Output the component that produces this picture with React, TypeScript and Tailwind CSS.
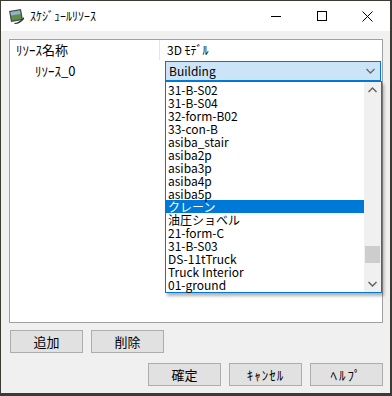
import React from "react";

const items = [
  "31-B-S02",
  "31-B-S04",
  "32-form-B02",
  "33-con-B",
  "asiba_stair",
  "asiba2p",
  "asiba3p",
  "asiba4p",
  "asiba5p",
  "クレーン",
  "油圧ショベル",
  "21-form-C",
  "31-B-S03",
  "DS-11tTruck",
  "Truck Interior",
  "01-ground",
];

function Chevron({ up = false, color = "#606060" }: { up?: boolean; color?: string }) {
  return (
    <svg width="9" height="6" viewBox="0 0 9 6">
      <path
        d={up ? "M0.5 5 L4.5 1 L8.5 5" : "M0.5 1 L4.5 5 L8.5 1"}
        fill="none"
        stroke={color}
        strokeWidth="1.4"
      />
    </svg>
  );
}

function Btn({ label, track = "" }: { label: string; track?: string }) {
  return (
    <div
      className={
        "w-[73px] h-[23px] bg-[#e1e1e1] border border-[#adadad] flex items-center justify-center text-[13px] text-black " +
        track
      }
    >
      {label}
    </div>
  );
}

export default function App() {
  return (
    <div
      className="w-[392px] h-[396px] bg-[#3c3a34] pt-px pl-px pr-[2px] pb-[3px]"
      style={{ fontFamily: "'Noto Sans CJK JP', 'Noto Sans', sans-serif" }}
    >
      <div className="w-full h-full flex flex-col bg-[#f0f0f0]">
        {/* Title bar */}
        <div className="h-[30px] bg-white flex items-center shrink-0">
          <div className="ml-[7px] w-[16px] h-[16px]">
            <svg width="17" height="17" viewBox="0 0 17 17">
              <path d="M1 3 L13 1 L15 12 L3 14 Z" fill="#4a4a4a" />
              <path d="M2.5 4 L12 2.5 L13.5 11 L4 12.5 Z" fill="#5e8f4a" />
              <path d="M2.5 4 L12 2.5 L12.5 6 L3 7.5 Z" fill="#8fb3c9" />
              <path d="M6 15 Q11 15 16 9 L16 11 Q12 16 7 16 Z" fill="#2e2e2e" />
            </svg>
          </div>
          <div className="ml-[6px] text-[12px] text-black leading-none">ｽｹｼﾞｭｰﾙﾘｿｰｽ</div>
          <div className="ml-auto flex h-full">
            <div className="w-[46px] h-full flex items-center justify-center">
              <div className="w-[10px] h-px bg-black" />
            </div>
            <div className="w-[46px] h-full flex items-center justify-center">
              <div className="w-[10px] h-[10px] border border-black" />
            </div>
            <div className="w-[45px] h-full flex items-center justify-center">
              <svg width="11" height="11" viewBox="0 0 11 11">
                <path d="M0.5 0.5 L10.5 10.5 M10.5 0.5 L0.5 10.5" stroke="#000" strokeWidth="1" />
              </svg>
            </div>
          </div>
        </div>

        {/* Body */}
        <div className="flex-1 pt-[8px] pl-[8px] pr-[7px]">
          <div className="h-[284px] w-[374px] bg-white border border-[#a0a0a0] flex flex-col">
            {/* header */}
            <div className="h-[20px] flex text-[12px] text-black shrink-0">
              <div className="w-[150px] pl-[6px] flex items-center border-r border-[#e5e5e5] text-[13px]">
                ﾘｿｰｽ名称
              </div>
              <div className="pl-[7px] flex items-center">3D ﾓﾃﾞﾙ</div>
            </div>
            {/* row */}
            <div className="flex text-[12px] text-black">
              <div className="w-[151px] pl-[25px] pt-[1px] text-[13px]">ﾘｿｰｽ_0</div>
              <div className="relative ml-[4px] mt-px">
                <div className="w-[216px] h-[20px] bg-[#cce4f7] border border-[#0078d7] flex items-center pl-[3px]">
                  <span>Building</span>
                  <div className="ml-auto mr-[5px] flex items-center">
                    <Chevron color="#6a6a6a" />
                  </div>
                </div>
                {/* dropdown list */}
                <div className="absolute left-0 top-[20px] w-[217px] bg-white border border-[#0078d7] shadow-[2px_3px_3px_rgba(0,0,0,0.3)] flex z-10">
                  <div className="w-[198px] py-px">
                    {items.map((t) => (
                      <div
                        key={t}
                        className={
                          "h-[13px] leading-[13px] pl-[2px] text-[12px] whitespace-nowrap " +
                          (t === "クレーン" ? "bg-[#0078d7] text-white" : "text-black")
                        }
                      >
                        {t}
                      </div>
                    ))}
                  </div>
                  <div className="w-[17px] bg-[#f0f0f0] flex flex-col items-center">
                    <div className="h-[16px] flex items-center justify-center">
                      <Chevron up color="#606060" />
                    </div>
                    <div className="h-[148px]" />
                    <div className="w-[15px] h-[17px] bg-[#cdcdcd]" />
                    <div className="flex-1 flex items-end justify-center pb-[5px]">
                      <Chevron color="#606060" />
                    </div>
                  </div>
                </div>
              </div>
            </div>
          </div>

          <div className="mt-[7px] flex gap-[8px] pl-px">
            <Btn label="追加" />
            <Btn label="削除" />
          </div>
          <div className="mt-[10px] flex justify-end gap-[8px]">
            <Btn label="確定" />
            <Btn label="ｷｬﾝｾﾙ" track="tracking-[1px]" />
            <Btn label="ﾍﾙﾌﾟ" track="tracking-[2px]" />
          </div>
        </div>
      </div>
    </div>
  );
}
